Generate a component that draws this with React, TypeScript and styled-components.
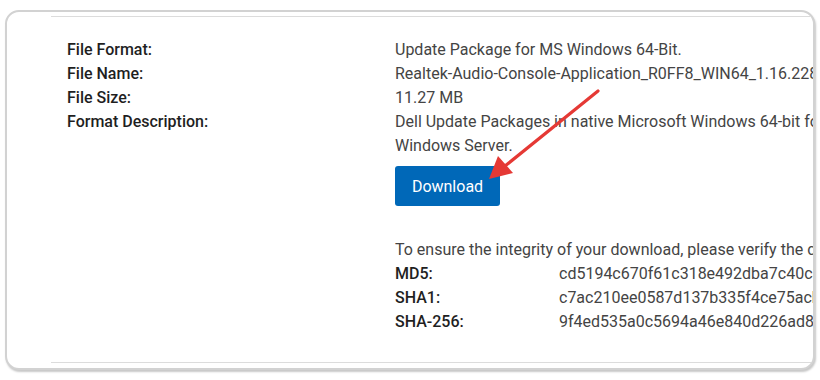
import React from "react";
import styled, { createGlobalStyle } from "styled-components";

const Global = createGlobalStyle`
  html, body { margin: 0; padding: 0; background: #ffffff; }
  body { font-family: Roboto, "Liberation Sans", Arial, sans-serif; }
`;

const Page = styled.div`
  width: 820px;
  height: 380px;
  padding: 10px 5px 0 5px;
  box-sizing: border-box;
  position: relative;
  overflow: hidden;
`;

const Card = styled.div`
  width: 810px;
  height: 360px;
  box-sizing: border-box;
  background: #ffffff;
  border: 2px solid #d2d2d2;
  border-radius: 14px;
  box-shadow: 1px 2px 2px rgba(0, 0, 0, 0.22);
  padding: 4px 0 0 44px;
  overflow: hidden;
`;

const Section = styled.div`
  border-top: 1px solid #dcdcdc;
  border-bottom: 1px solid #dcdcdc;
  padding: 21px 0 28px 16px;
  font-size: 16px;
  line-height: 24px;
  white-space: nowrap;
`;

const InfoGrid = styled.div`
  display: grid;
  grid-template-columns: 328px 1fr;
`;

const Label = styled.div`
  color: #1f1f1f;
  font-weight: 500;
`;

const Value = styled.div`
  color: #444444;
`;

const Actions = styled.div`
  padding: 8px 0 32px 328px;
`;

const DownloadButton = styled.button`
  display: block;
  height: 40px;
  width: 105px;
  border: none;
  border-radius: 3px;
  background: #0068b8;
  color: #ffffff;
  font-family: Roboto, "Liberation Sans", Arial, sans-serif;
  font-size: 16px;
  padding: 0;
`;

const Verify = styled.div`
  padding-left: 328px;
`;

const Note = styled.p`
  margin: 0;
  color: #444444;
`;

const HashGrid = styled.div`
  display: grid;
  grid-template-columns: 164px 1fr;
`;

const ArrowSvg = styled.svg`
  position: absolute;
  left: 0;
  top: 0;
  pointer-events: none;
`;

const info: [string, string[]][] = [
  ["File Format:", ["Update Package for MS Windows 64-Bit."]],
  ["File Name:", ["Realtek-Audio-Console-Application_R0FF8_WIN64_1.16.228.0_A00.EXE"]],
  ["File Size:", ["11.27 MB"]],
  [
    "Format Description:",
    [
      "Dell Update Packages in native Microsoft Windows 64-bit format do not require that Microsoft",
      "Windows Server.",
    ],
  ],
];

const hashes: [string, string][] = [
  ["MD5:", "cd5194c670f61c318e492dba7c40c3a1"],
  ["SHA1:", "c7ac210ee0587d137b335f4ce75acb2d10d4e9f1"],
  ["SHA-256:", "9f4ed535a0c5694a46e840d226ad8e1c3b5f97a0d2e4c61b8f73a9d05e2c4b17"],
];

export default function App() {
  return (
    <>
      <Global />
      <Page>
        <Card>
          <Section>
            <InfoGrid>
              {info.map(([l, vs]) => (
                <React.Fragment key={l}>
                  <Label>{l}</Label>
                  <Value>
                    {vs.map((v) => (
                      <div key={v}>{v}</div>
                    ))}
                  </Value>
                </React.Fragment>
              ))}
            </InfoGrid>
            <Actions>
              <DownloadButton>Download</DownloadButton>
            </Actions>
            <Verify>
              <Note>To ensure the integrity of your download, please verify the checksum value.</Note>
              <HashGrid>
                {hashes.map(([l, v]) => (
                  <React.Fragment key={l}>
                    <Label>{l}</Label>
                    <Value>{v}</Value>
                  </React.Fragment>
                ))}
              </HashGrid>
            </Verify>
          </Section>
        </Card>
        <ArrowSvg width="820" height="380" viewBox="0 0 820 380">
          <line x1="598" y1="91" x2="505" y2="166" stroke="#e53935" strokeWidth="3.2" strokeLinecap="round" />
          <polygon points="489,179 498,156 513,173" fill="#e53935" />
        </ArrowSvg>
      </Page>
    </>
  );
}
